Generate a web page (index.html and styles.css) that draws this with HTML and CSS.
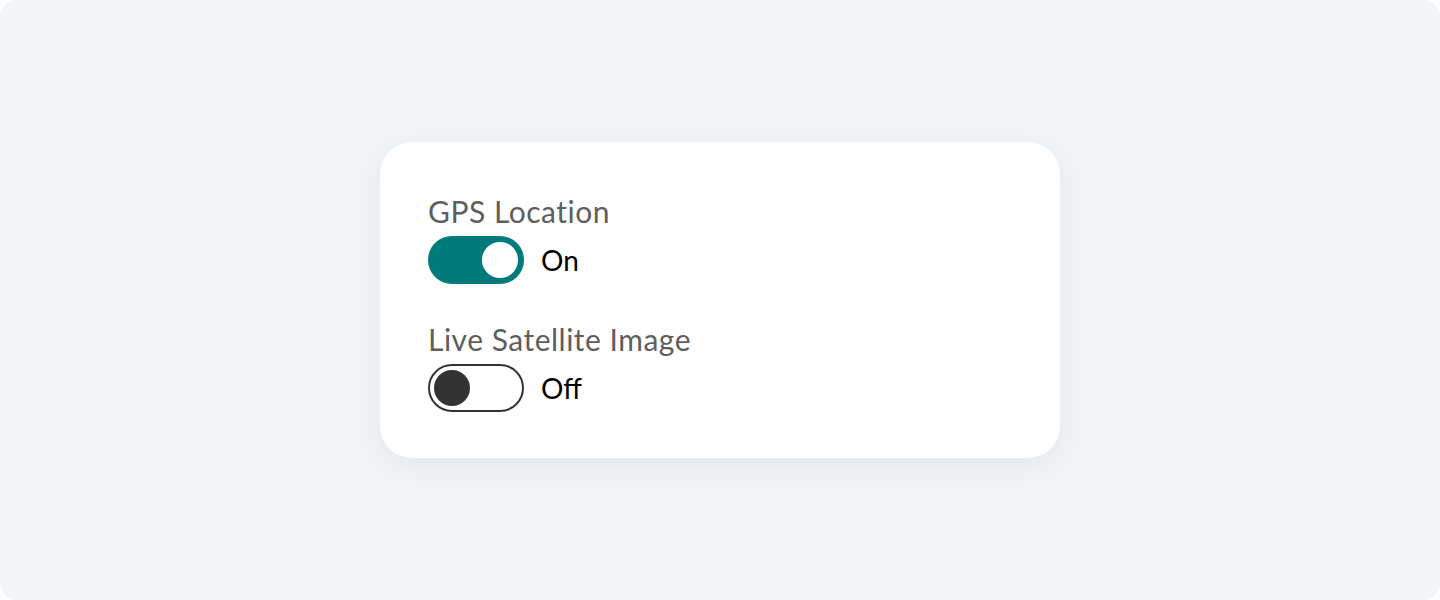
FILE: index.html
```html
<!DOCTYPE html>
<html lang="en">
<head>
<meta charset="utf-8">
<title>Settings</title>
<link rel="stylesheet" href="styles.css">
</head>
<body>
<main class="stage">
  <section class="card">
    <div class="setting">
      <div class="label">GPS Location</div>
      <div class="control">
        <span class="switch switch-on" role="switch" aria-checked="true"><span class="knob"></span></span>
        <span class="state">On</span>
      </div>
    </div>
    <div class="setting">
      <div class="label">Live Satellite Image</div>
      <div class="control">
        <span class="switch switch-off" role="switch" aria-checked="false"><span class="knob"></span></span>
        <span class="state">Off</span>
      </div>
    </div>
  </section>
</main>
</body>
</html>
```

FILE: styles.css
```css
* { box-sizing: border-box; }
html, body { margin: 0; padding: 0; background: #ffffff; }
body {
  font-family: Lato, "Open Sans", "Liberation Sans", sans-serif;
}
.stage {
  width: 1440px;
  height: 600px;
  background: #f2f5f8;
  border-radius: 16px;
  display: flex;
  align-items: center;
  justify-content: center;
}
.card {
  width: 680px;
  height: 316px;
  background: #ffffff;
  border-radius: 32px;
  padding: 48px 48px 46px;
  box-shadow: 0 8px 28px rgba(30, 40, 60, 0.07);
  display: flex;
  flex-direction: column;
  gap: 34px;
}
.setting { display: flex; flex-direction: column; }
.label {
  font-size: 30px;
  line-height: 42px;
  margin-bottom: 4px;
  letter-spacing: 0.5px;
  color: #5e5e5e;
}
.control {
  display: flex;
  align-items: center;
  gap: 17px;
}
.switch {
  width: 96px;
  height: 48px;
  border-radius: 24px;
  display: flex;
  align-items: center;
  padding: 0 6px;
}
.switch-on {
  background: #007a7a;
  justify-content: flex-end;
}
.switch-off {
  background: #ffffff;
  border: 2px solid #333333;
  padding: 0 4px;
}
.knob {
  width: 36px;
  height: 36px;
  border-radius: 50%;
}
.switch-on .knob { background: #ffffff; }
.switch-off .knob { background: #333333; }
.state {
  font-size: 28px;
  line-height: 46px;
  color: #000000;
}
```
